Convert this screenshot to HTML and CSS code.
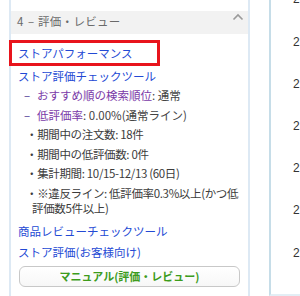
FILE: index.html
```html
<!DOCTYPE html>
<html lang="ja">
<head>
<meta charset="utf-8">
<link rel="stylesheet" href="styles.css">
</head>
<body>
<div class="page">
  <section class="panel">
    <div class="panel-head">
      <span class="panel-title"><span class="step">4</span><span class="step-dash">–</span>評価・レビュー</span>
      <svg class="chev" width="12" height="8" viewBox="0 0 12 8"><polyline points="1.5,6.5 6,2 10.5,6.5" fill="none" stroke="#9a9a9a" stroke-width="1.6"/></svg>
    </div>
    <div class="panel-body">
      <div class="highlight"><a class="link">ストアパフォーマンス</a></div>
      <div class="row first"><a class="link">ストア評価チェックツール</a></div>
      <div class="row sub"><span class="dash">–</span><a class="visited">おすすめ順の検索順位</a>: 通常</div>
      <div class="row sub"><span class="dash">–</span><a class="visited">低評価率</a>: 0.00%(通常ライン)</div>
      <div class="row bul">・期間中の注文数: 18件</div>
      <div class="row bul">・期間中の低評価数: 0件</div>
      <div class="row bul">・集計期間: 10/15-12/13 (60日)</div>
      <div class="row bul">・※違反ライン: 低評価率0.3%以上(かつ低評価数5件以上)</div>
      <div class="row gap-l"><a class="link">商品レビューチェックツール</a></div>
      <div class="row gap-m"><a class="link">ストア評価(お客様向け)</a></div>
      <div class="btn">マニュアル(評価・レビュー)</div>
    </div>
  </section>
  <aside class="side">
    <div class="num first-num">2</div>
    <div class="num">2</div>
    <div class="num">2</div>
    <div class="num">2</div>
    <div class="num">2</div>
    <div class="num">2</div>
    <div class="num">2</div>
  </aside>
</div>
</body>
</html>
```

FILE: styles.css
```css
html, body {
  margin: 0;
  padding: 0;
  background: #fff;
}
body {
  width: 300px;
  height: 296px;
  overflow: hidden;
  font-family: "Noto Sans CJK JP", "Noto Sans", sans-serif;
  font-size: 11.5px;
  color: #444;
}
.page {
  display: flex;
  height: 296px;
}
.panel {
  margin-left: 9px;
  width: 237px;
  border-left: 2px solid #dde9f4;
  border-right: 2px solid #dde9f4;
  padding-top: 11px;
}
.panel-head {
  height: 23px;
  background: #f2f2f2;
  display: flex;
  justify-content: space-between;
  align-items: flex-start;
  padding-left: 6px;
  padding-right: 4px;
}
.panel-title {
  color: #6a6a6a;
  font-size: 11.5px;
  line-height: 20px;
  letter-spacing: 0.3px;
}
.step {
  display: inline-block;
  width: 11px;
}
.step-dash {
  display: inline-block;
  width: 10px;
}
.chev {
  margin-top: 2px;
}
.panel-body {
  display: flex;
  flex-direction: column;
  align-items: flex-start;
  padding-top: 6px;
}
.highlight {
  margin-left: -2px;
  width: 139px;
  height: 20px;
  line-height: 20px;
  border: 3px solid #e8141c;
  padding-left: 6px;
}
.link {
  color: #2349d4;
  text-decoration: none;
}
.visited {
  color: #7a3aa8;
  text-decoration: none;
}
.row {
  line-height: 15px;
  margin-top: 4.5px;
  padding-left: 7px;
  white-space: nowrap;
}
.row.first {
  margin-top: 2.5px;
}
.row.sub {
  padding-left: 13px;
}
.dash {
  display: inline-block;
  width: 13px;
  color: #4e3394;
}
.row.bul {
  white-space: normal;
  padding-left: 21px;
  text-indent: -6px;
  width: 216px;
  color: #3c3c3c;
  letter-spacing: -0.35px;
}
.row.gap-l {
  margin-top: 8px;
}
.row.gap-m {
  margin-top: 6px;
}
.btn {
  margin-top: 6.5px;
  margin-left: 8px;
  width: 219px;
  height: 19px;
  line-height: 19px;
  border: 1px solid #c8c8c8;
  border-radius: 6px;
  background: linear-gradient(#ffffff, #f7f7f7);
  text-align: center;
  color: #3d9c1c;
  font-weight: bold;
  font-size: 11px;
}
.side {
  margin-left: 19px;
  flex: 1;
  height: 294px;
  border-left: 2px solid #c6dde8;
  border-bottom: 2px solid #e3eef5;
  overflow: hidden;
  padding-left: 22px;
  font-family: "Liberation Sans", Arial, sans-serif;
  font-size: 12px;
  color: #333;
}
.num {
  height: 42.2px;
  line-height: 42.2px;
}
.first-num {
  margin-top: -21.6px;
}
```
